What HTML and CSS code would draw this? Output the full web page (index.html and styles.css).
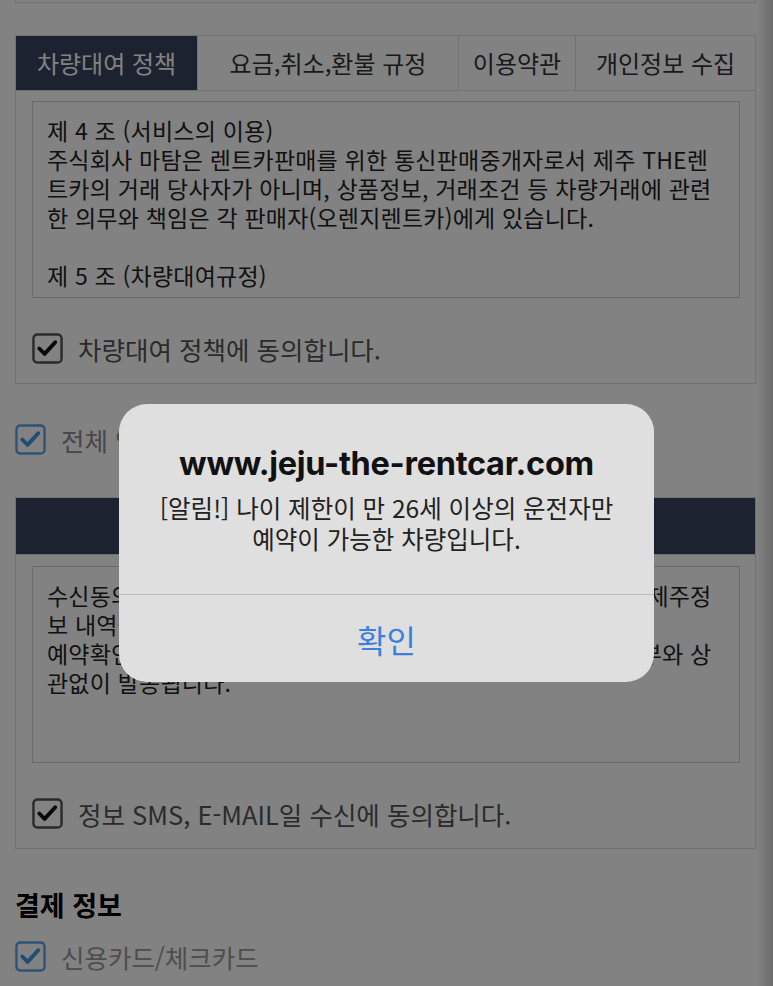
FILE: index.html
```html
<!DOCTYPE html>
<html lang="ko">
<head>
    <meta charset="UTF-8">
    <meta name="viewport" content="width=device-width, initial-scale=1.0">
    <title>예약하기</title>
    <link rel="stylesheet" href="styles.css">
</head>
<body>
    <div class="page">
        <div class="prevBox"></div>

        <!-- 약관 탭 -->
        <div class="policy">
            <div class="tabs">
                <div class="tab active">차량대여 정책</div>
                <div class="tab">요금,취소,환불 규정</div>
                <div class="tab">이용약관</div>
                <div class="tab">개인정보 수집</div>
            </div>
            <div class="panel">
                <div class="terms">
                    제 4 조 (서비스의 이용)<br>
                    주식회사 마탐은 렌트카판매를 위한 통신판매중개자로서 제주 THE렌<br>
                    트카의 거래 당사자가 아니며, 상품정보, 거래조건 등 차량거래에 관련<br>
                    한 의무와 책임은 각 판매자(오렌지렌트카)에게 있습니다.<br>
                    <br>
                    제 5 조 (차량대여규정)
                </div>
                <label class="check">
                    <svg class="box" viewBox="0 0 32 32"><rect x="1.5" y="1.5" width="29" height="29" rx="4"/><polyline points="7.5,16 13,21.5 24,9.5"/></svg>
                    차량대여 정책에 동의합니다.
                </label>
            </div>
        </div>

        <label class="check all">
            <svg class="box blue" viewBox="0 0 32 32"><rect x="1.5" y="1.5" width="29" height="29" rx="4"/><polyline points="7.5,16 13,21.5 24,9.5"/></svg>
            전체 약관에 동의합니다.
        </label>

        <!-- 수신동의 -->
        <div class="policy second">
            <div class="tabs">
                <div class="tab active full">마케팅 정보 수신동의</div>
            </div>
            <div class="panel">
                <div class="terms">
                    수신동의시 렌트카 특가 및 할인 이벤트 소식 등의 다양한 여행 제주정<br>
                    보 내역을 문자 및 이메일로 받아보실 수 있습니다.<br>
                    예약확인 및 결제관련 안내 문자 등은 마케팅 정보 수신동의 여부와 상<br>
                    관없이 발송됩니다.
                </div>
                <label class="check">
                    <svg class="box" viewBox="0 0 32 32"><rect x="1.5" y="1.5" width="29" height="29" rx="4"/><polyline points="7.5,16 13,21.5 24,9.5"/></svg>
                    정보 SMS, E-MAIL일 수신에 동의합니다.
                </label>
            </div>
        </div>

        <h3 class="payTitle">결제 정보</h3>
        <label class="check pay">
            <svg class="box blue" viewBox="0 0 32 32"><rect x="1.5" y="1.5" width="29" height="29" rx="4"/><polyline points="7.5,16 13,21.5 24,9.5"/></svg>
            신용카드/체크카드
        </label>
    </div>

    <!-- 알림창 -->
    <div class="dim"></div>
    <div class="alert">
        <div class="alertBody">
            <div class="alertTitle">www.jeju-the-rentcar.com</div>
            <div class="alertMsg">[알림!] 나이 제한이 만 26세 이상의 운전자만<br>예약이 가능한 차량입니다.</div>
        </div>
        <div class="alertBtn">확인</div>
    </div>
</body>
</html>
```

FILE: styles.css
```css
body{
    margin: 0;
    background: #fff;
    font-family: "Noto Sans CJK KR", "Noto Sans", sans-serif;
    color: #222;
}
.page{
    padding: 0 17px 0 15px;
}
.prevBox{
    height: 2px;
    border: 1px solid #ddd;
    border-top: none;
}
.policy{
    margin-top: 32px;
}
.tabs{
    display: grid;
    grid-template-columns: 181px 261px 117px 1fr;
    border: 1px solid #ddd;
    border-bottom: none;
}
.tab{
    height: 54px;
    line-height: 54px;
    text-align: center;
    font-size: 24px;
    color: #333;
    border-left: 1px solid #ddd;
}
.tab:first-child{
    border-left: none;
}
.tab.active{
    background-color: #37435c;
    color: #fff;
}
.tab.full{
    grid-column: 1 / -1;
    height: 56px;
}
.panel{
    border: 1px solid #ddd;
    padding: 10px 15px 16px 16px;
}
.second .panel{
    padding-top: 11px;
}
.terms{
    height: 181px;
    overflow: hidden;
    border: 1px solid #d0d0d0;
    padding: 14px 14px 0;
    font-size: 23px;
    line-height: 29px;
    letter-spacing: 0.2px;
    white-space: nowrap;
}
.check{
    display: flex;
    align-items: center;
    gap: 15px;
    margin-top: 32px;
    font-size: 25.5px;
    color: #555;
}
.box{
    width: 31px;
    height: 31px;
    flex: none;
    fill: none;
    stroke: #555;
    stroke-width: 2.5;
}
.box polyline{
    stroke: #111;
    stroke-width: 4;
    stroke-linecap: round;
    stroke-linejoin: round;
}
.box.blue rect{
    stroke: #5aa4e6;
}
.box.blue polyline{
    stroke: #3f97e2;
}
.check.all{
    margin-top: 37px;
    color: #8c8c8c;
}
.second{
    margin-top: 39px;
}
.payTitle{
    margin: 36px 0 0;
    font-size: 27px;
    font-weight: 700;
    color: #000;
}
.check.pay{
    margin-top: 14px;
    color: #999;
}
.dim{
    position: fixed;
    top: 0;
    left: 0;
    right: 0;
    bottom: 0;
    background: linear-gradient(to right, rgba(0,0,0,.49) calc(100% - 16px), rgba(0,0,0,.58));
}
.alert{
    position: fixed;
    top: 404px;
    left: 119px;
    width: 535px;
    height: 278px;
    border-radius: 28px;
    background: #dfdfdf;
    display: flex;
    flex-direction: column;
    text-align: center;
}
.alertBody{
    padding-top: 42px;
    height: 148px;
    border-bottom: 1px solid #bdbdbd;
}
.alertTitle{
    font-family: Inter, "Noto Sans CJK KR", sans-serif;
    font-weight: 700;
    font-size: 32.5px;
    line-height: 36px;
    letter-spacing: -0.3px;
    color: #111;
}
.alertMsg{
    margin-top: 10px;
    font-size: 24.5px;
    line-height: 31px;
    color: #222;
}
.alertBtn{
    flex: 1;
    display: flex;
    align-items: center;
    justify-content: center;
    font-size: 32px;
    color: #3a80de;
}
```
